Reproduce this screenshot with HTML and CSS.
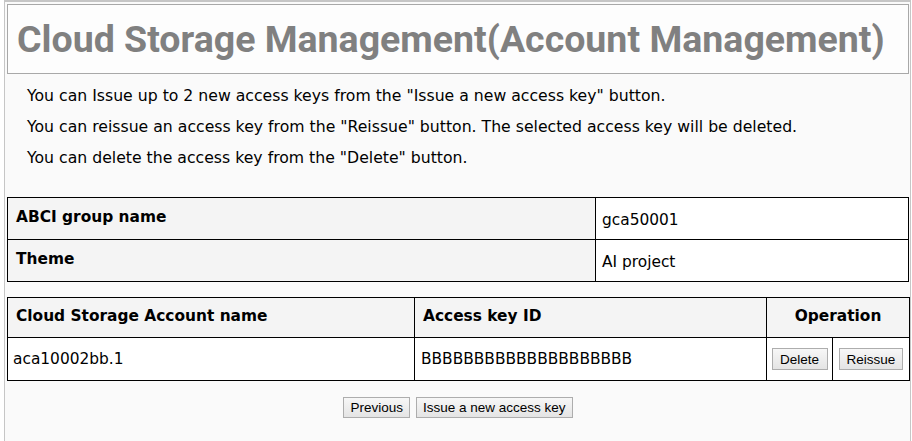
FILE: index.html
```html
<!DOCTYPE html>
<html>
<head>
<meta charset="utf-8">
<link rel="stylesheet" href="styles.css">
</head>
<body>
<div class="page">
  <div class="header">
    <h1 class="title">Cloud Storage Management(Account Management)</h1>
  </div>
  <div class="notes">
    <p>You can Issue up to 2 new access keys from the "Issue a new access key" button.</p>
    <p>You can reissue an access key from the "Reissue" button. The selected access key will be deleted.</p>
    <p>You can delete the access key from the "Delete" button.</p>
  </div>
  <table class="info">
    <colgroup><col class="w-label"><col></colgroup>
    <tr><th class="info-label">ABCI group name</th><td class="info-value">gca50001</td></tr>
    <tr><th class="info-label">Theme</th><td class="info-value">AI project</td></tr>
  </table>
  <table class="keys">
    <colgroup><col class="w-name"><col class="w-key"><col class="w-del"><col class="w-re"></colgroup>
    <tr class="head-row">
      <th>Cloud Storage Account name</th>
      <th>Access key ID</th>
      <th class="col-op" colspan="2">Operation</th>
    </tr>
    <tr class="data-row">
      <td class="cell-name">aca10002bb.1</td>
      <td class="cell-key">BBBBBBBBBBBBBBBBBBBB</td>
      <td class="op-cell op-del"><button class="btn">Delete</button></td>
      <td class="op-cell op-re"><button class="btn">Reissue</button></td>
    </tr>
  </table>
  <div class="actions">
    <button class="btn btn-lg">Previous</button>
    <button class="btn btn-lg">Issue a new access key</button>
  </div>
</div>
</body>
</html>
```
FILE: styles.css
```css
html, body {
  margin: 0;
  padding: 0;
  background: #ffffff;
}
body {
  font-family: "DejaVu Sans", Verdana, sans-serif;
  color: #000;
}
.page {
  margin: 0 1px 0 4px;
  border: 1px solid #c6c6c6;
  border-top: 2px solid #c6c6c6;
  border-bottom: none;
  background: #fafafa;
  padding: 2px 1px 0 2px;
  min-height: 460px;
}
.header {
  border: 1px solid #a8a8a8;
  background: #fdfdfd;
  height: 68px;
  display: flex;
  align-items: center;
  padding-left: 9px;
}
.title {
  margin: 0;
  font-family: Roboto, "DejaVu Sans", sans-serif;
  font-weight: bold;
  font-size: 37.5px;
  color: #808080;
  white-space: nowrap;
}
.notes {
  padding: 12px 0 0 20px;
  height: 123px;
  box-sizing: border-box;
}
.notes p {
  margin: 0 0 11px 0;
  font-size: 15.7px;
  line-height: 20px;
  white-space: nowrap;
}
table {
  border-collapse: collapse;
  width: 902px;
  background: #fff;
  table-layout: fixed;
}
th, td {
  border: 1px solid #000;
  text-align: left;
  font-size: 15.4px;
  padding: 0 8px;
  vertical-align: middle;
}
th {
  background: #f4f4f4;
  font-weight: bold;
  padding-bottom: 3px;
}
.w-label {
  width: 588px;
}
.info tr {
  height: 42px;
}
.info-value {
  padding-left: 6px;
  padding-top: 2px;
}
.keys {
  margin-top: 15px;
}
.w-name {
  width: 407px;
}
.w-key {
  width: 352px;
}
.w-del {
  width: 66px;
}
.w-re {
  width: 77px;
}
.keys tr.head-row {
  height: 40px;
}
.keys tr.data-row {
  height: 43px;
}
.col-op {
  text-align: center;
}
.cell-name {
  padding-left: 5px;
}
.cell-key {
  padding-left: 6px;
}
.op-cell {
  padding: 0;
  text-align: center;
}
.btn {
  font-family: "Liberation Sans", Arial, sans-serif;
  font-size: 13.5px;
  background: linear-gradient(#f7f7f7, #e4e4e4);
  border: 1px solid #adadad;
  padding: 0 6px;
  color: #000;
  border-radius: 0;
  height: 22px;
}
.op-del .btn {
  width: 56px;
}
.op-re .btn {
  width: 64px;
}
.actions {
  display: flex;
  justify-content: center;
  gap: 6px;
  margin-top: 16px;
}
.btn-lg {
  height: 21px;
  padding: 0 6px;
}
```
